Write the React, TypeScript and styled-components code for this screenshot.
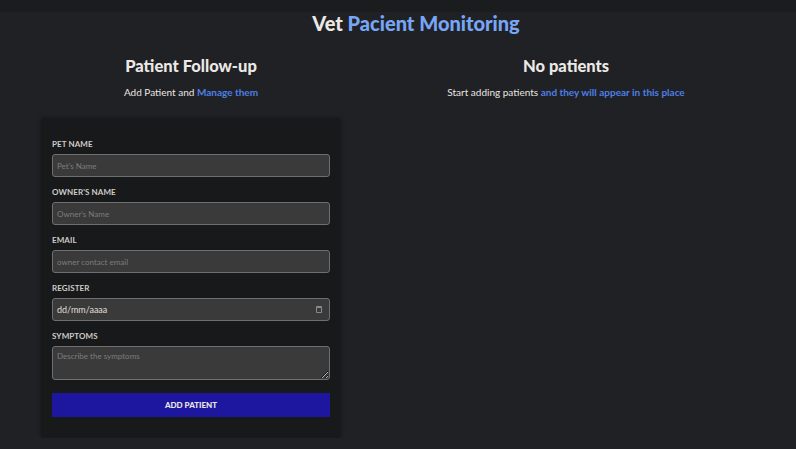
import React from "react";
import styled, { createGlobalStyle } from "styled-components";

const Global = createGlobalStyle`
  html, body { margin: 0; padding: 0; background: #202124; }
  body { font-family: Lato, "Open Sans", sans-serif; color: #e8e6e3; }
  * { box-sizing: border-box; }
`;

const TopBar = styled.div`
  height: 12px;
  background: #1b1c1e;
`;

const Page = styled.div`
  width: 750px;
  margin-left: 41px;
`;

const Title = styled.h1`
  margin: 0;
  text-align: center;
  font-size: 20px;
  font-weight: 900;
  line-height: 22px;
  color: #ebe9e6;
`;

const Accent = styled.span<{ $tone?: "light" | "dark" }>`
  color: ${(p) => (p.$tone === "dark" ? "#4d7fe6" : "#78a6f7")};
  font-weight: ${(p) => (p.$tone === "dark" ? 700 : 900)};
`;

const Columns = styled.div`
  display: grid;
  grid-template-columns: 300px 450px;
  margin-top: 22px;
`;

const Column = styled.section`
  display: flex;
  flex-direction: column;
  align-items: stretch;
`;

const Heading = styled.h2`
  margin: 0;
  text-align: center;
  font-size: 16.5px;
  font-weight: 900;
  line-height: 20px;
  color: #ebe9e6;
`;

const Sub = styled.p`
  margin: 10px 0 0;
  text-align: center;
  font-size: 10px;
  line-height: 12px;
  color: #e8e6e3;
`;

const Card = styled.form`
  margin-top: 20px;
  background: #18191b;
  border-radius: 4px;
  box-shadow: 0 0 4px rgba(0, 0, 0, 0.35);
  padding: 21px 11px 21px;
  display: flex;
  flex-direction: column;
`;

const Field = styled.div`
  display: flex;
  flex-direction: column;
  margin-bottom: 10px;
`;

const Label = styled.label`
  font-size: 8px;
  font-weight: 700;
  line-height: 10px;
  color: #d0ccc6;
  text-transform: uppercase;
  margin-bottom: 5px;
  letter-spacing: 0.1px;
`;

const inputCss = `
  width: 100%;
  background: #3a3a3a;
  border: 1px solid #6f6f6f;
  border-radius: 3px;
  color: #e8e6e3;
  font-family: Lato, "Open Sans", sans-serif;
  font-size: 8px;
  padding: 0 4px;
  outline: none;
  &::placeholder { color: #7c7c7c; }
`;

const Input = styled.input`
  ${inputCss}
  height: 23px;
`;

const DateBox = styled.div`
  ${inputCss}
  height: 23px;
  display: flex;
  align-items: center;
  justify-content: space-between;
  font-size: 9px;
  color: #e0ddd8;
`;

const CalIcon = styled.span`
  width: 6px;
  height: 7px;
  border: 1px solid #8a8a8a;
  border-top-width: 2px;
  border-radius: 1px;
  margin-right: 3px;
`;

const Area = styled.textarea`
  ${inputCss}
  height: 34px;
  padding-top: 4px;
  resize: vertical;
`;

const Button = styled.button`
  margin-top: 3px;
  height: 24px;
  border: none;
  background: #1d17a0;
  color: #e8e6e3;
  font-family: Lato, "Open Sans", sans-serif;
  font-size: 8px;
  font-weight: 900;
  text-transform: uppercase;
`;

export default function App() {
  return (
    <>
      <Global />
      <TopBar />
      <Page>
        <Title>
          Vet <Accent>Pacient Monitoring</Accent>
        </Title>
        <Columns>
          <Column>
            <Heading>Patient Follow-up</Heading>
            <Sub>
              Add Patient and <Accent $tone="dark">Manage them</Accent>
            </Sub>
            <Card onSubmit={(e) => e.preventDefault()}>
              <Field>
                <Label>Pet Name</Label>
                <Input placeholder="Pet's Name" />
              </Field>
              <Field>
                <Label>Owner's Name</Label>
                <Input placeholder="Owner's Name" />
              </Field>
              <Field>
                <Label>Email</Label>
                <Input placeholder="owner contact email" />
              </Field>
              <Field>
                <Label>Register</Label>
                <DateBox>
                  dd/mm/aaaa
                  <CalIcon />
                </DateBox>
              </Field>
              <Field>
                <Label>Symptoms</Label>
                <Area placeholder="Describe the symptoms" />
              </Field>
              <Button type="submit">Add Patient</Button>
            </Card>
          </Column>
          <Column>
            <Heading>No patients</Heading>
            <Sub>
              Start adding patients <Accent $tone="dark">and they will appear in this place</Accent>
            </Sub>
          </Column>
        </Columns>
      </Page>
    </>
  );
}
